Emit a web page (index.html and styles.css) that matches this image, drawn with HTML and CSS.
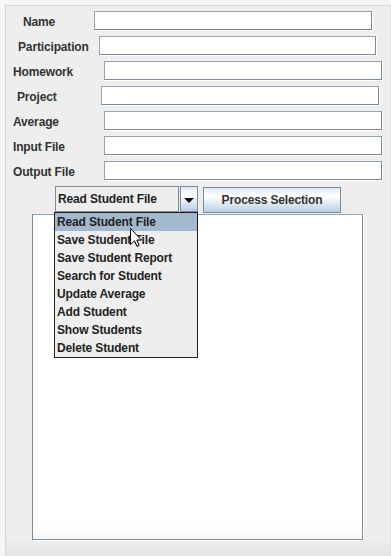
FILE: index.html
```html
<!DOCTYPE html>
<html>
<head>
<meta charset="utf-8">
<link rel="stylesheet" href="styles.css">
</head>
<body>
<div class="window">
  <div class="form">
    <div class="row r-name"><span class="label">Name</span><span class="field"></span></div>
    <div class="row r-part"><span class="label">Participation</span><span class="field"></span></div>
    <div class="row r-home"><span class="label">Homework</span><span class="field"></span></div>
    <div class="row r-proj"><span class="label">Project</span><span class="field"></span></div>
    <div class="row r-avg"><span class="label">Average</span><span class="field"></span></div>
    <div class="row r-in"><span class="label">Input File</span><span class="field"></span></div>
    <div class="row r-out"><span class="label">Output File</span><span class="field"></span></div>
    <div class="controls">
      <div class="combo">
        <div class="combo-display">Read Student File</div>
        <div class="combo-arrow"><span class="tri"></span></div>
        <ul class="popup">
          <li class="sel">Read Student File</li>
          <li>Save Student File</li>
          <li>Save Student Report</li>
          <li>Search for Student</li>
          <li>Update Average</li>
          <li>Add Student</li>
          <li>Show Students</li>
          <li>Delete Student</li>
        </ul>
      </div>
      <div class="btn">Process Selection</div>
    </div>
    <div class="textarea"></div>
  </div>
</div>
<svg class="cursor" width="13" height="20" viewBox="0 0 13 20">
  <path d="M0.5 0.5 L0.5 16.5 L4.5 12.8 L7 18.5 L9.2 17.5 L6.8 12 L11.5 12 Z" fill="#fff" stroke="#000" stroke-width="1" stroke-linejoin="miter"/>
</svg>
</body>
</html>
```
FILE: styles.css
```css
html, body {
  margin: 0;
  padding: 0;
}
body {
  width: 391px;
  height: 556px;
  background: #f6f6f6;
  overflow: hidden;
  font-family: "Liberation Sans", Arial, sans-serif;
  font-weight: bold;
  font-size: 12px;
  letter-spacing: -0.15px;
  color: #333333;
}
.window {
  box-sizing: border-box;
  margin: 5px 0 0 5px;
  width: 386px;
  height: 551px;
  border-top: 1px solid #d9d9d9;
  border-left: 1px solid #d9d9d9;
  border-right: 1px solid #e2e2e2;
  background: linear-gradient(to bottom, #eeeeee calc(100% - 18px), #e5e5e5);
}
.form {
  padding-top: 5px;
  display: flex;
  flex-direction: column;
}
.row {
  display: flex;
  align-items: center;
  height: 19px;
  margin-bottom: 6px;
}
.label {
  display: block;
  box-sizing: border-box;
  line-height: 16px;
  padding-top: 3px;
  white-space: nowrap;
}
.field {
  display: block;
  box-sizing: border-box;
  width: 278px;
  height: 19px;
  background: #ffffff;
  border: 1px solid #95a4b2;
  border-right-color: #7a8a99;
  border-bottom-color: #7a8a99;
  box-shadow: 1px 1px 0 #ffffff;
}
.r-name { padding-left: 17px; }
.r-name .label { width: 71px; }
.r-part { padding-left: 12px; }
.r-part .label { width: 81px; }
.r-part .field { width: 277px; }
.r-home, .r-avg, .r-in, .r-out { padding-left: 7px; }
.r-home .label, .r-avg .label, .r-in .label, .r-out .label { width: 91px; }
.r-proj { padding-left: 11px; }
.r-proj .label { width: 84px; }

.controls {
  display: flex;
  align-items: flex-start;
  height: 27px;
  padding-left: 49px;
}
.combo {
  position: relative;
  display: flex;
  gap: 1px;
  width: 143px;
  height: 26px;
}
.combo-display {
  box-sizing: border-box;
  width: 124px;
  height: 26px;
  padding-left: 2px;
  line-height: 24px;
  background: #eeeeee;
  border: 1px solid #7a8a99;
  white-space: nowrap;
  color: #222222;
}
.combo-arrow {
  box-sizing: border-box;
  width: 18px;
  height: 26px;
  border: 1px solid #7a8a99;
  background: linear-gradient(to bottom, #dde8f3 0%, #ffffff 30%, #ffffff 35%, #b8cfe5 100%);
  display: flex;
  align-items: center;
  justify-content: center;
}
.tri {
  display: block;
  width: 0;
  height: 0;
  margin-top: 3px;
  border-left: 5px solid transparent;
  border-right: 5px solid transparent;
  border-top: 5px solid #111111;
}
.popup {
  position: absolute;
  left: -1px;
  top: 26px;
  box-sizing: border-box;
  width: 144px;
  margin: 0;
  padding: 0;
  list-style: none;
  background: #eeeeee;
  border: 1px solid #1e1e1e;
  z-index: 2;
}
.popup li {
  height: 18px;
  line-height: 18px;
  padding-left: 2px;
  white-space: nowrap;
  color: #222222;
}
.popup li.sel {
  background: #a3b8cc;
}
.btn {
  box-sizing: border-box;
  margin-left: 5px;
  margin-top: 1px;
  width: 138px;
  height: 26px;
  line-height: 24px;
  text-align: center;
  border: 1px solid #7a8a99;
  background: linear-gradient(to bottom, #dde8f3 0%, #ffffff 30%, #ffffff 35%, #b8cfe5 100%);
  color: #333333;
  white-space: nowrap;
}
.textarea {
  box-sizing: border-box;
  margin-top: 1px;
  margin-left: 26px;
  width: 331px;
  height: 326px;
  border: 1px solid #95a4b2;
  border-left-color: #7a8a99;
  border-right-color: #7a8a99;
  border-bottom-color: #7a8a99;
  box-shadow: 1px 1px 0 #ffffff;
  background: linear-gradient(to bottom, #ffffff calc(100% - 14px), #f6f6f6);
}
.cursor {
  position: absolute;
  left: 130px;
  top: 228px;
  z-index: 5;
}
```
